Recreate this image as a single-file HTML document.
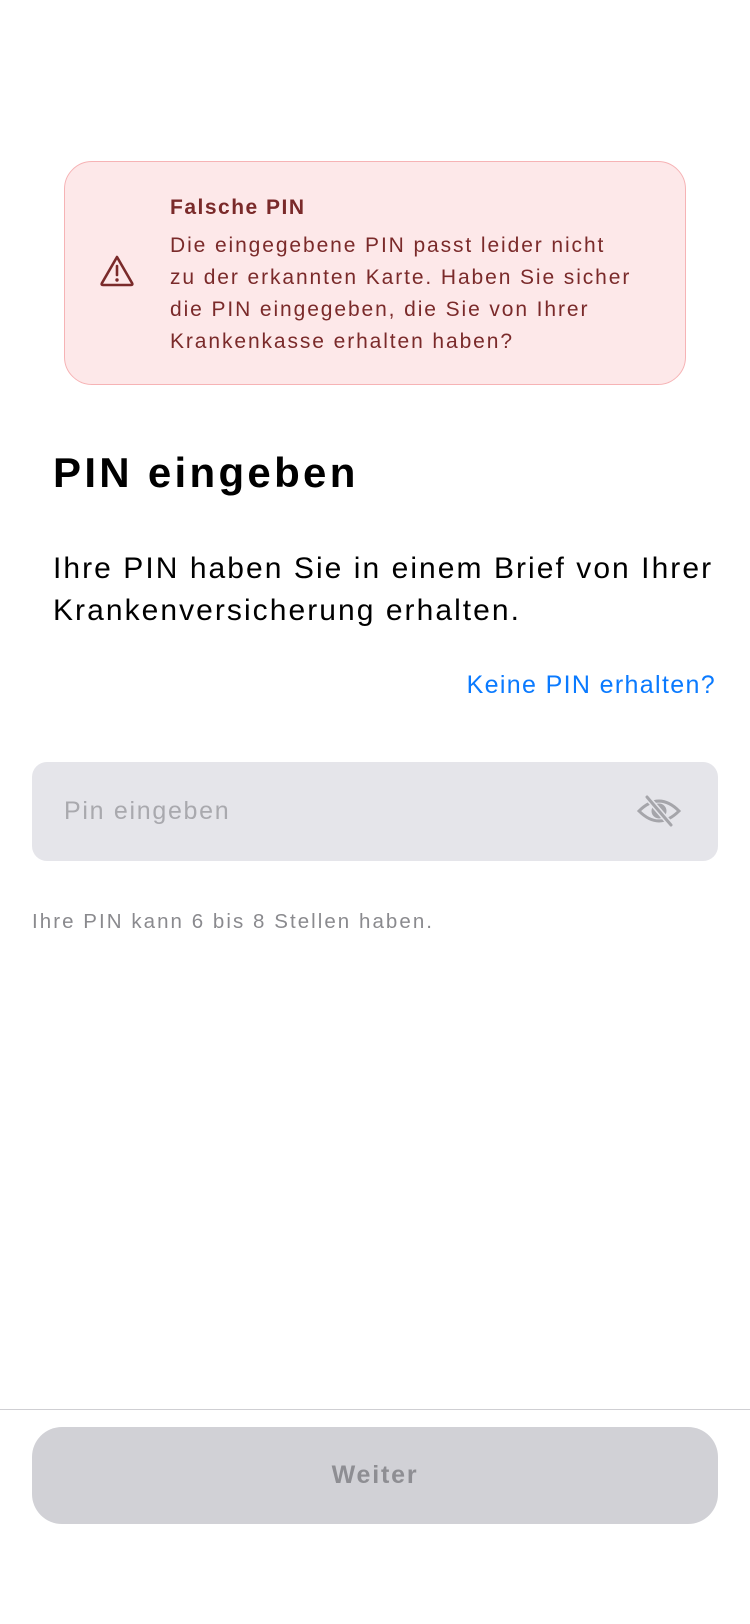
<!DOCTYPE html>
<html><head><meta charset="utf-8"><style>
*{margin:0;padding:0;box-sizing:border-box}
body{width:750px;height:1624px;background:#fff;position:relative;font-family:"Liberation Sans",sans-serif;overflow:hidden}
.a{position:absolute}
.card{left:64px;top:161px;width:622px;height:224px;background:#fde8e9;border:1.5px solid #f6b3b5;border-radius:28px}
.t{left:170px;top:196px;font-size:21px;font-weight:bold;color:#7a2a2a;letter-spacing:1.5px}
.b{left:170px;top:230px;font-size:21px;line-height:32px;color:#7a2a2a;white-space:nowrap;letter-spacing:1.9px}
h1{position:absolute;left:53px;top:449px;font-size:42px;font-weight:bold;color:#000;letter-spacing:3.3px}
.p{left:53px;top:548px;font-size:30px;line-height:42px;color:#000;letter-spacing:2.05px;white-space:nowrap}
.l{right:34px;top:671px;font-size:25px;color:#0a7aff;letter-spacing:1.35px}
.in{left:32px;top:762px;width:686px;height:99px;background:#e5e5ea;border-radius:15px}
.ph{left:64px;top:797px;font-size:25px;color:#a9a9ae;letter-spacing:1.7px}
.h{left:32px;top:910px;font-size:20.5px;color:#8a8a8e;letter-spacing:2.05px}
.sep{left:0;top:1409px;width:750px;height:1px;background:#cfcfd3}
.btn{left:32px;top:1427px;width:686px;height:97px;background:#d1d1d6;border-radius:30px;text-align:center;line-height:97px;font-size:25px;font-weight:bold;color:#8e8e93;letter-spacing:1.8px}
</style></head><body>
<div class="a card"></div>
<svg class="a" style="left:99px;top:254px" width="36" height="34" viewBox="0 0 36 34"><path d="M18 3 L33 29 Q34 31 32 31 L4 31 Q2 31 3 29 Z" fill="none" stroke="#7a2a2a" stroke-width="2.6" stroke-linejoin="round"/><line x1="18" y1="12" x2="18" y2="21" stroke="#7a2a2a" stroke-width="2.6" stroke-linecap="round"/><circle cx="18" cy="26" r="1.7" fill="#7a2a2a"/></svg>
<div class="a t">Falsche PIN</div>
<div class="a b">Die eingegebene PIN passt leider nicht<br>zu der erkannten Karte. Haben Sie sicher<br>die PIN eingegeben, die Sie von Ihrer<br>Krankenkasse erhalten haben?</div>
<h1>PIN eingeben</h1>
<div class="a p">Ihre PIN haben Sie in einem Brief von Ihrer<br>Krankenversicherung erhalten.</div>
<div class="a l">Keine PIN erhalten?</div>
<div class="a in"></div>
<div class="a ph">Pin eingeben</div>
<svg class="a" style="left:636px;top:794px" width="46" height="34" viewBox="0 0 46 34"><path d="M3 17 Q23 -3 43 17 Q23 37 3 17 Z" fill="none" stroke="#a5a5aa" stroke-width="3"/><circle cx="23" cy="17" r="7.5" fill="#a5a5aa"/><line x1="11" y1="3" x2="35" y2="31" stroke="#e5e5ea" stroke-width="6"/><line x1="11" y1="3" x2="35" y2="31" stroke="#a5a5aa" stroke-width="3" stroke-linecap="round"/></svg>
<div class="a h">Ihre PIN kann 6 bis 8 Stellen haben.</div>
<div class="a sep"></div>
<div class="a btn">Weiter</div>
</body></html>
